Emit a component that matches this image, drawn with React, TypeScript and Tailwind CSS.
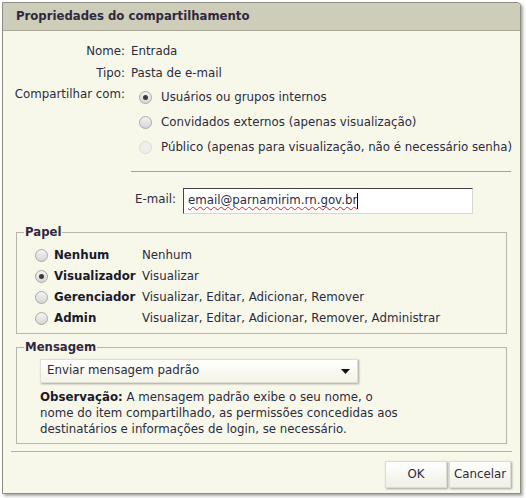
const ROLES = [
  { id: 'none', label: 'Nenhum', desc: 'Nenhum', checked: false },
  { id: 'viewer', label: 'Visualizador', desc: 'Visualizar', checked: true },
  { id: 'manager', label: 'Gerenciador', desc: 'Visualizar, Editar, Adicionar, Remover', checked: false },
  { id: 'admin', label: 'Admin', desc: 'Visualizar, Editar, Adicionar, Remover, Administrar', checked: false },
]

const SHARE = [
  { label: 'Usuários ou grupos internos', checked: true, disabled: false },
  { label: 'Convidados externos (apenas visualização)', checked: false, disabled: false },
  { label: 'Público (apenas para visualização, não é necessário senha)', checked: false, disabled: true },
]

function Radio({ checked, disabled }: { checked?: boolean; disabled?: boolean }) {
  return (
    <span
      className={`w-[13px] h-[13px] rounded-full border flex items-center justify-center shrink-0 ${
        disabled
          ? 'border-[#dcdcd6] bg-[#efefea]'
          : 'border-[#a9a9a6] bg-gradient-to-b from-[#f4f4f4] to-[#d6d6d6]'
      }`}
    >
      {checked && <span className="w-[5px] h-[5px] rounded-full bg-[#3a3a3a]" />}
    </span>
  )
}

export default function App() {
  return (
    <div
      className="w-[526px] h-[498px] bg-white pt-[2px] pl-[2px] text-[11.8px] text-[#2b2b40]"
      style={{ fontFamily: '"DejaVu Sans", Verdana, sans-serif' }}
    >
      <div className="w-[519px] h-[492px] border border-[#8d8d82] rounded-tr-[4px] bg-[#f8f8ea] shadow-[2px_2px_3px_rgba(0,0,0,0.35)] flex flex-col">
        <div className="h-[28px] shrink-0 bg-[#cdcdb9] border-b border-[#a9a996] rounded-tr-[4px] flex items-center pl-[13px]">
          <span className="text-[11.7px] font-bold text-[#302840]">Propriedades do compartilhamento</span>
        </div>

        <div className="grid grid-cols-[122px_1fr] gap-x-[6px] mt-[13px] leading-[15px]">
          <span className="text-right">Nome:</span>
          <span>Entrada</span>
          <span className="text-right mt-[7px]">Tipo:</span>
          <span className="mt-[7px]">Pasta de e-mail</span>
          <span className="text-right mt-[6px]">Compartilhar com:</span>
          <div className="flex flex-col gap-[10px] mt-[9px] pl-[8px]">
            {SHARE.map((s) => (
              <label key={s.label} className="flex items-center gap-[9px]">
                <Radio checked={s.checked} disabled={s.disabled} />
                <span>{s.label}</span>
              </label>
            ))}
          </div>
        </div>

        <div className="ml-[128px] mr-[9px] mt-[16px] border-t border-[#a3a39a]" />

        <div className="flex items-start mt-[16px]">
          <span className="w-[173px] text-right pt-[3px]">E-mail:</span>
          <div className="ml-[7px] w-[290px] h-[26px] bg-white border-t border-l border-[#444] border-r border-b border-r-[#d8d8d0] border-b-[#d8d8d0] flex items-center pl-[4px]">
            <span className="underline decoration-wavy decoration-[#e02020] decoration-1 underline-offset-2">
              email@parnamirim.rn.gov.br
            </span>
            <span className="w-px h-[16px] bg-black" />
          </div>
        </div>

        <fieldset className="mx-[13px] mt-[10px] border border-[#b6b6aa] pl-[7px] pb-[7px] pt-[6px]">
          <legend className="font-bold text-[11.7px] px-[1px] text-[#302840]">Papel</legend>
          <div className="grid grid-cols-[auto_1fr] gap-x-[6px] gap-y-[6px] leading-[15px] pl-[11px]">
            {ROLES.map((r) => (
              <div key={r.id} className="contents">
                <label className="flex items-center gap-[6px]">
                  <Radio checked={r.checked} />
                  <span className="font-bold text-[#1a1a2a] w-[82px]">{r.label}</span>
                </label>
                <span>{r.desc}</span>
              </div>
            ))}
          </div>
        </fieldset>

        <fieldset className="mx-[13px] mt-[5px] border border-[#b6b6aa] pl-[7px] pb-[6px]">
          <legend className="font-bold text-[11.7px] px-[1px] text-[#302840]">Mensagem</legend>
          <div className="pl-[16px]">
            <div className="w-[318px] h-[24px] mt-[3px] bg-gradient-to-b from-white to-[#f4f4e6] border border-[#e0e0d4] shadow-[1px_1px_2px_rgba(0,0,0,0.35)] flex items-center justify-between pl-[6px] pr-[6px]">
              <span>Enviar mensagem padrão</span>
              <svg width="9" height="5" viewBox="0 0 9 5" className="mr-[1px]">
                <path d="M0 0h9L4.5 5z" fill="#111" />
              </svg>
            </div>
            <p className="mt-[6px] leading-[16px] w-[368px]">
              <b className="text-[#1a1a2a]">Observação:</b> A mensagem padrão exibe o seu nome, o nome do item
              compartilhado, as permissões concedidas aos destinatários e informações de login, se necessário.
            </p>
          </div>
        </fieldset>

        <div className="mx-[8px] mt-[7px] border-t border-[#b3b3a8]" />

        <div className="flex justify-end gap-[2px] mt-[9px] mr-[9px]">
          <button className="w-[62px] h-[27px] bg-gradient-to-b from-white to-[#f0f0e6] border border-[#dcdcd0] shadow-[1px_1px_2px_rgba(0,0,0,0.35)] text-[#2b2b40]">
            OK
          </button>
          <button className="w-[62px] h-[27px] bg-gradient-to-b from-white to-[#f0f0e6] border border-[#dcdcd0] shadow-[1px_1px_2px_rgba(0,0,0,0.35)] text-[#2b2b40]">
            Cancelar
          </button>
        </div>
      </div>
    </div>
  )
}
